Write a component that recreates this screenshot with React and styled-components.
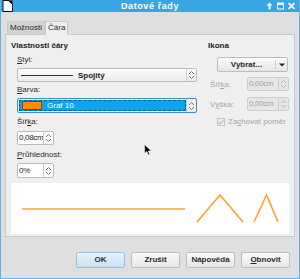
import React from 'react'
import styled, { createGlobalStyle } from 'styled-components'

const Global = createGlobalStyle`
  html, body { margin: 0; padding: 0; }
  body { font-family: "Liberation Sans", Arial, sans-serif; }
  * { box-sizing: border-box; }
`

const Window = styled.div`
  width: 300px;
  height: 279px;
  display: flex;
  flex-direction: column;
  background: #dfdfdf;
  border: 1px solid #5cb4e6;
  border-top: none;
  position: relative;
  overflow: hidden;
  font-size: 8px;
  color: #232323;
`

const TitleBar = styled.div`
  height: 12px;
  margin: 0 -1px;
  background: #38a6e4;
  position: relative;
  display: flex;
  align-items: center;
  justify-content: center;
`

const Title = styled.div`
  color: #fff;
  font-weight: bold;
  font-size: 9px;
  letter-spacing: 0.6px;
  line-height: 12px;
`

const AppIcon = styled.svg`
  position: absolute;
  left: 2px;
  top: 0;
`

const TitleButtons = styled.div`
  position: absolute;
  right: 5px;
  top: 2px;
  display: flex;
  gap: 4px;
`

const Body = styled.div`
  flex: 1;
  display: flex;
  flex-direction: column;
  padding: 9px 4px 0 4px;
`

const Tabs = styled.div`
  display: flex;
  padding-left: 2px;
  height: 13px;
`

const Tab = styled.div`
  padding: 0 2px;
  line-height: 12px;
  background: ${p => (p.$active ? '#efefef' : '#d2d2d2')};
  border: 1px solid ${p => (p.$active ? '#c9c9c9' : '#cacaca')};
  border-bottom: none;
  color: #2a2a2a;
  margin-bottom: ${p => (p.$active ? '-1px' : '0')};
  position: relative;
  z-index: 1;
`

const Panel = styled.div`
  height: 203px;
  background: #efefef;
  border: 1px solid #c9c9c9;
  padding: 5px 5px 0 5px;
  display: flex;
  flex-direction: column;
`

const Columns = styled.div`
  display: grid;
  grid-template-columns: 186px 86px;
  column-gap: 6px;
`

const Column = styled.div`
  display: flex;
  flex-direction: column;
`

const Heading = styled.div`
  font-weight: bold;
  line-height: 11px;
  height: 11px;
  padding-left: ${p => p.$indent || 0}px;
`

const Label = styled.div`
  line-height: 12px;
  height: 12px;
  padding-left: 6px;
  margin-top: ${p => p.$mt || 0}px;
  color: #2a2a2a;
`

const Select = styled.div`
  margin: ${p => p.$mt || 0}px 0 0 6px;
  height: ${p => p.$h || 14}px;
  border: 1px solid ${p => (p.$focus ? '#3a8fc4' : '#bcbcbc')};
  border-radius: 2px;
  background: ${p => (p.$focus ? '#efefef' : 'linear-gradient(#fdfdfd, #ebebeb)')};
  display: flex;
  align-items: stretch;
`

const SelectBody = styled.div`
  flex: 1;
  display: flex;
  align-items: center;
  gap: 5px;
  padding-left: 3px;
  background: ${p => (p.$selected ? '#0ea3ee' : 'transparent')};
  outline: ${p => (p.$selected ? '1px dashed #0a5d8f' : 'none')};
  outline-offset: -1px;
  margin: ${p => (p.$selected ? '1px 0 1px 1px' : '0')};
  color: ${p => (p.$selected ? '#fff' : '#232323')};
`

const SelectText = styled.span`
  font-weight: ${p => (p.$bold ? 'bold' : 'normal')};
`

const LineSample = styled.div`
  width: 52px;
  height: 1px;
  background: #333;
`

const Swatch = styled.div`
  width: 20px;
  height: 9px;
  background: #ff8c00;
  border: 1px solid #7a4a10;
`

const SpinBox = styled.div`
  width: 10px;
  flex: none;
  border-left: 1px solid #cfcfcf;
  display: flex;
  align-items: center;
  justify-content: center;
  background: ${p => (p.$disabled ? '#e4e4e4' : 'transparent')};
`

const Field = styled.div`
  margin: ${p => p.$mt || 0}px 0 0 ${p => (p.$ml !== undefined ? p.$ml : 6)}px;
  width: ${p => p.$w || 37}px;
  height: ${p => p.$h || 14}px;
  border: 1px solid ${p => (p.$disabled ? '#cdcdcd' : '#bcbcbc')};
  border-radius: 2px;
  background: ${p => (p.$disabled ? '#e6e6e6' : '#fff')};
  display: flex;
`

const FieldText = styled.div`
  flex: 1;
  padding-left: 1px;
  letter-spacing: -0.3px;
  line-height: ${p => p.$h || 12}px;
  color: ${p => (p.$disabled ? '#a3a3a3' : '#232323')};
  white-space: nowrap;
  overflow: hidden;
`

const ButtonWrap = styled.div`
  margin: 6px 0 0 14px;
  height: 15px;
  width: 71px;
  border: 1px solid #bdbdbd;
  border-radius: 2px;
  background: linear-gradient(#fbfbfb, #e6e6e6);
  display: flex;
`

const ButtonMain = styled.div`
  flex: 1;
  text-align: center;
  line-height: 13px;
  font-weight: bold;
  color: #2a2a2a;
`

const ButtonArrow = styled.div`
  width: 12px;
  border-left: 1px solid #cfcfcf;
  display: flex;
  align-items: center;
  justify-content: center;
  margin: 2px 0;
`

const Row = styled.div`
  display: flex;
  align-items: center;
  margin-top: ${p => p.$mt || 0}px;
`

const RowLabel = styled.div`
  width: 44px;
  padding-left: 7px;
  color: #a6a6a6;
`

const Check = styled.div`
  display: flex;
  align-items: center;
  gap: 3px;
  margin: 6px 0 0 14px;
  color: #a6a6a6;
  white-space: nowrap;
`

const CheckBox = styled.div`
  width: 8px;
  height: 8px;
  flex: none;
  border: 1px solid #c4c4c4;
  background: #ececec;
  display: flex;
  align-items: center;
  justify-content: center;
`

const Preview = styled.div`
  margin: 5px 0 0 0;
  height: 51px;
  background: #fff;
`

const Buttons = styled.div`
  display: flex;
  justify-content: flex-end;
  gap: 6px;
  margin-top: 15px;
  padding-right: 5px;
`

const Button = styled.div`
  width: 49px;
  height: 16px;
  border: 1px solid ${p => (p.$default ? '#8fc1e3' : '#bdbdbd')};
  border-radius: 2px;
  background: ${p => (p.$default ? 'linear-gradient(#e6f3fb, #c6e2f5)' : 'linear-gradient(#fbfbfb, #e6e6e6)')};
  text-align: center;
  line-height: 14px;
  font-weight: bold;
  color: #2a2a2a;
`

const Cursor = styled.svg`
  position: absolute;
  left: 143px;
  top: 144px;
`

const U = styled.span`
  text-decoration: underline;
`

const Arrows = ({ color = '#7b7b7b' }) => (
  <svg width="7" height="10" viewBox="0 0 7 10">
    <path d="M1 4 L3.5 1.5 L6 4 M1 6 L3.5 8.5 L6 6" stroke={color} strokeWidth="1" fill="none" />
  </svg>
)

export default function App() {
  return (
    <>
      <Global />
      <Window>
        <TitleBar>
          <AppIcon width="11" height="12" viewBox="0 0 11 12">
            <path d="M1 0.5 H7 L10.5 4 V11.5 H1 Z" fill="#fff" stroke="#111" strokeWidth="1" />
            <path d="M6 0.5 L10.5 5 V0.5 Z" fill="#111" />
          </AppIcon>
          <Title>Datové řady</Title>
          <TitleButtons>
            <svg width="7" height="8" viewBox="0 0 7 8">
              <path d="M3.5 0.5 L6.5 3.5 H4.5 V7.5 H2.5 V3.5 H0.5 Z" fill="#fff" />
            </svg>
            <svg width="7" height="8" viewBox="0 0 7 8">
              <rect x="0.5" y="1" width="6" height="6" fill="none" stroke="#fff" strokeWidth="1" />
              <rect x="0.5" y="1" width="6" height="2" fill="#fff" />
            </svg>
            <svg width="7" height="8" viewBox="0 0 7 8">
              <path d="M0.5 1 L6.5 7 M6.5 1 L0.5 7" stroke="#fff" strokeWidth="1.6" />
            </svg>
          </TitleButtons>
        </TitleBar>
        <Body>
          <Tabs>
            <Tab>Možnosti</Tab>
            <Tab $active>Čára</Tab>
          </Tabs>
          <Panel>
            <Columns>
              <Column>
                <Heading>Vlastnosti čáry</Heading>
                <Label $mt={3}><U>S</U>tyl:</Label>
                <Select $mt={2}>
                  <SelectBody>
                    <LineSample />
                    <SelectText $bold>Spojitý</SelectText>
                  </SelectBody>
                  <SpinBox><Arrows /></SpinBox>
                </Select>
                <Label $mt={2}><U>B</U>arva:</Label>
                <Select $mt={2} $h={15} $focus>
                  <SelectBody $selected>
                    <Swatch />
                    <SelectText>Graf 10</SelectText>
                  </SelectBody>
                  <SpinBox><Arrows /></SpinBox>
                </Select>
                <Label $mt={3}>Šíř<U>k</U>a:</Label>
                <Field $mt={3}>
                  <FieldText>0,08cm</FieldText>
                  <SpinBox><Arrows /></SpinBox>
                </Field>
                <Label $mt={4}><U>P</U>růhlednost:</Label>
                <Field $mt={2} $h={15}>
                  <FieldText $h={13}>0%</FieldText>
                  <SpinBox><Arrows /></SpinBox>
                </Field>
              </Column>
              <Column>
                <Heading $indent={5}>Ikona</Heading>
                <ButtonWrap>
                  <ButtonMain>Vybrat...</ButtonMain>
                  <ButtonArrow>
                    <svg width="6" height="4" viewBox="0 0 6 4">
                      <path d="M0 0.5 H6 L3 3.5 Z" fill="#222" />
                    </svg>
                  </ButtonArrow>
                </ButtonWrap>
                <Row $mt={5}>
                  <RowLabel>Šíř<U>k</U>a:</RowLabel>
                  <Field $ml={0} $w={42} $disabled>
                    <FieldText $disabled>0,00cm</FieldText>
                    <SpinBox $disabled><Arrows color="#b8b8b8" /></SpinBox>
                  </Field>
                </Row>
                <Row $mt={6}>
                  <RowLabel>V<U>ý</U>ška:</RowLabel>
                  <Field $ml={0} $w={42} $disabled>
                    <FieldText $disabled>0,00cm</FieldText>
                    <SpinBox $disabled><Arrows color="#b8b8b8" /></SpinBox>
                  </Field>
                </Row>
                <Check>
                  <CheckBox>
                    <svg width="6" height="6" viewBox="0 0 6 6">
                      <path d="M0.5 3 L2.3 5 L5.5 0.8" stroke="#a8a8a8" strokeWidth="1" fill="none" />
                    </svg>
                  </CheckBox>
                  <span>Za<U>c</U>hovat poměr</span>
                </Check>
              </Column>
            </Columns>
            <Preview>
              <svg width="278" height="51" viewBox="0 0 278 51">
                <g stroke="#ffa22b" strokeWidth="1.6" fill="none">
                  <path d="M11 26 H174" />
                  <path d="M186 39 L209 12 L232 39" />
                  <path d="M243 39 L255.5 12 L267 39" />
                </g>
              </svg>
            </Preview>
          </Panel>
          <Buttons>
            <Button $default>OK</Button>
            <Button>Zrušit</Button>
            <Button>Nápověda</Button>
            <Button><U>O</U>bnovit</Button>
          </Buttons>
        </Body>
        <Cursor width="8" height="12" viewBox="0 0 8 12">
          <path d="M0.5 0.5 V9.5 L2.8 7.4 L4.4 11 L5.8 10.4 L4.3 7 H7.3 Z" fill="#000" stroke="#fff" strokeWidth="0.6" />
        </Cursor>
      </Window>
    </>
  )
}
